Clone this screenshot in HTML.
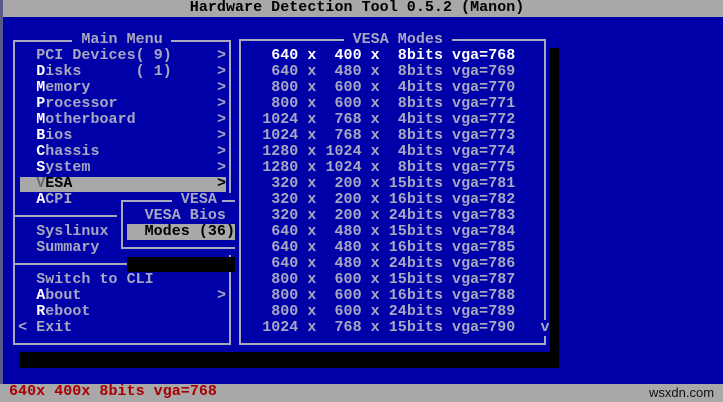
<!DOCTYPE html>
<html><head><meta charset="utf-8"><style>
*{margin:0;padding:0;box-sizing:border-box}
body{width:723px;height:402px;background:#0000a8;position:relative;overflow:hidden;font-family:"Liberation Mono",monospace;font-size:15px;font-weight:bold;color:#a8a8c0}
.t{position:absolute;white-space:pre;line-height:16px;height:16px;letter-spacing:0.04px}
.w{color:#fff}
.k{color:#000}
.b{position:absolute;background:#0000a8}
.h{position:absolute;height:2px;background:#a8a8c0}
.v{position:absolute;width:2px;background:#a8a8c0}
.blk{position:absolute;background:#000}
.gry{position:absolute;background:#a8a8a8}
.a{position:absolute;left:217px;line-height:16px;height:16px}
</style></head><body>
<div class="gry" style="left:0;top:0;width:723px;height:17px"></div>
<div class="t k" style="left:189.8px;top:0">Hardware Detection Tool 0.5.2 (Manon)</div>
<div style="position:absolute;left:0;top:0;width:3px;height:384px;background:#5a5a8a"></div>

<!-- main menu -->
<div class="h" style="left:13px;top:40px;width:218px"></div>
<div class="h" style="left:13px;top:343px;width:218px"></div>
<div class="v" style="left:13px;top:40px;height:305px"></div>
<div class="v" style="left:229px;top:40px;height:305px"></div>
<div class="h" style="left:13px;top:215px;width:218px"></div>
<div class="h" style="left:13px;top:263px;width:218px"></div>
<div class="b" style="left:72px;top:33px;width:99px;height:14px"></div>
<div class="t" style="left:81.4px;top:32px">Main Menu</div>

<div class="t" style="left:36.2px;top:48px">PCI Devices( 9)</div>
<div class="t" style="left:36.2px;top:64px"><span class="w">D</span>isks      ( 1)</div>
<div class="t" style="left:36.2px;top:80px"><span class="w">M</span>emory</div>
<div class="t" style="left:36.2px;top:96px"><span class="w">P</span>rocessor</div>
<div class="t" style="left:36.2px;top:112px"><span class="w">M</span>otherboard</div>
<div class="t" style="left:36.2px;top:128px"><span class="w">B</span>ios</div>
<div class="t" style="left:36.2px;top:144px"><span class="w">C</span>hassis</div>
<div class="t" style="left:36.2px;top:160px"><span class="w">S</span>ystem</div>
<div class="gry" style="left:20px;top:177px;width:206px;height:15px"></div>
<div class="t k" style="left:36.2px;top:176px"><span style="color:#686878">V</span>ESA</div>
<div class="a" style="top:48px">&gt;</div>
<div class="a" style="top:64px">&gt;</div>
<div class="a" style="top:80px">&gt;</div>
<div class="a" style="top:96px">&gt;</div>
<div class="a" style="top:112px">&gt;</div>
<div class="a" style="top:128px">&gt;</div>
<div class="a" style="top:144px">&gt;</div>
<div class="a" style="top:160px">&gt;</div>
<div class="a k" style="top:176px">&gt;</div>
<div class="a" style="top:288px">&gt;</div>
<div class="t" style="left:36.2px;top:192px"><span class="w">A</span>CPI</div>
<div class="t" style="left:36.2px;top:224px">Syslinux</div>
<div class="t" style="left:36.2px;top:240px">Summary</div>
<div class="t" style="left:36.2px;top:272px">Switch to CLI</div>
<div class="t" style="left:36.2px;top:288px"><span class="w">A</span>bout</div>
<div class="t" style="left:36.2px;top:304px"><span class="w">R</span>eboot</div>
<div class="t" style="left:18.1px;top:320px">&lt; Exit</div>

<!-- vesa submenu -->
<div class="b" style="left:117px;top:193px;width:125px;height:62px"></div>
<div class="h" style="left:121px;top:200px;width:120px"></div>
<div class="h" style="left:121px;top:247px;width:120px"></div>
<div class="v" style="left:121px;top:200px;height:49px"></div>
<div class="b" style="left:172px;top:193px;width:50px;height:14px"></div>
<div class="t" style="left:180.8px;top:192px">VESA</div>
<div class="t" style="left:144.6px;top:208px">VESA Bios</div>
<div class="gry" style="left:127px;top:224px;width:108px;height:16px"></div>
<div class="t k" style="left:144.6px;top:224px">Modes (36)</div>
<div class="blk" style="left:127px;top:257px;width:108px;height:15px"></div>

<!-- vesa modes -->
<div class="b" style="left:235px;top:33px;width:315px;height:318px"></div>
<div class="h" style="left:239px;top:39px;width:307px"></div>
<div class="h" style="left:239px;top:343px;width:307px"></div>
<div class="v" style="left:239px;top:39px;height:306px"></div>
<div class="v" style="left:544px;top:39px;height:281px"></div>
<div class="v" style="left:544px;top:336px;height:9px"></div>
<div class="b" style="left:344px;top:33px;width:108px;height:14px"></div>
<div class="t" style="left:352.6px;top:32px">VESA Modes</div>
<div class="blk" style="left:550px;top:48px;width:9px;height:320px"></div>
<div class="blk" style="left:20px;top:352px;width:539px;height:16px"></div>

<div class="t w" style="left:262.2px;top:48px"> 640 x  400 x  8bits vga=768</div>
<div class="t" style="left:262.2px;top:64px"> 640 x  480 x  8bits vga=769</div>
<div class="t" style="left:262.2px;top:80px"> 800 x  600 x  4bits vga=770</div>
<div class="t" style="left:262.2px;top:96px"> 800 x  600 x  8bits vga=771</div>
<div class="t" style="left:262.2px;top:112px">1024 x  768 x  4bits vga=772</div>
<div class="t" style="left:262.2px;top:128px">1024 x  768 x  8bits vga=773</div>
<div class="t" style="left:262.2px;top:144px">1280 x 1024 x  4bits vga=774</div>
<div class="t" style="left:262.2px;top:160px">1280 x 1024 x  8bits vga=775</div>
<div class="t" style="left:262.2px;top:176px"> 320 x  200 x 15bits vga=781</div>
<div class="t" style="left:262.2px;top:192px"> 320 x  200 x 16bits vga=782</div>
<div class="t" style="left:262.2px;top:208px"> 320 x  200 x 24bits vga=783</div>
<div class="t" style="left:262.2px;top:224px"> 640 x  480 x 15bits vga=784</div>
<div class="t" style="left:262.2px;top:240px"> 640 x  480 x 16bits vga=785</div>
<div class="t" style="left:262.2px;top:256px"> 640 x  480 x 24bits vga=786</div>
<div class="t" style="left:262.2px;top:272px"> 800 x  600 x 15bits vga=787</div>
<div class="t" style="left:262.2px;top:288px"> 800 x  600 x 16bits vga=788</div>
<div class="t" style="left:262.2px;top:304px"> 800 x  600 x 24bits vga=789</div>
<div class="t" style="left:262.2px;top:320px">1024 x  768 x 15bits vga=790</div>
<div class="t" style="left:540.5px;top:320px">v</div>

<!-- status -->
<div class="gry" style="left:0;top:384px;width:723px;height:18px"></div>
<div class="t" style="left:9px;top:384px;color:#a80000">640x 400x 8bits vga=768</div>
<div style="position:absolute;left:649px;top:385px;font-family:'Liberation Sans',sans-serif;font-size:13px;font-weight:normal;color:#111">wsxdn.com</div>
</body></html>
